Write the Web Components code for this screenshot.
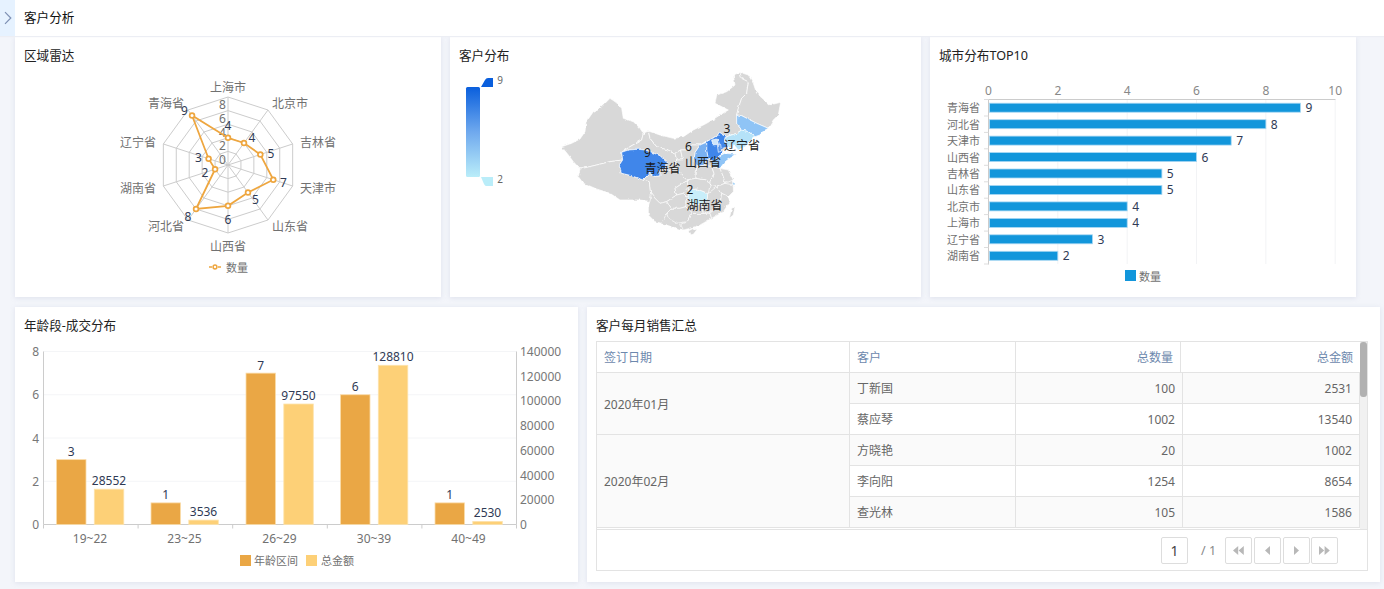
<!DOCTYPE html>
<html lang="zh">
<head>
<meta charset="utf-8">
<title>客户分析</title>
<style>
html,body{margin:0;padding:0;background:#f3f5fa;height:589px;overflow:hidden;font-family:"Noto Sans","Noto Sans CJK SC",sans-serif;}
</style>
</head>
<body>
<app-shell>
  <top-bar slot="top" label="客户分析"></top-bar>
  <card-row cols="426px 471px 426px" h="260">
    <chart-card title-text="区域雷达"><radar-chart></radar-chart></chart-card>
    <chart-card title-text="客户分布"><map-chart></map-chart></chart-card>
    <chart-card title-text="城市分布TOP10"><rank-chart></rank-chart></chart-card>
  </card-row>
  <card-row cols="563px 793px" h="275">
    <chart-card title-text="年龄段-成交分布"><age-chart></age-chart></chart-card>
    <chart-card title-text="客户每月销售汇总"><sales-table></sales-table></chart-card>
  </card-row>
</app-shell>
<script>
const FONT='"Noto Sans","Noto Sans CJK SC",sans-serif';
const T=(x,y,s,o={})=>`<text x="${x}" y="${y}" dominant-baseline="central" text-anchor="${o.a||'middle'}" font-size="${o.s||12}" fill="${o.c||'#717171'}">${s}</text>`;
class Base extends HTMLElement{
  connectedCallback(){ if(!this.shadowRoot){this.attachShadow({mode:'open'});this.shadowRoot.innerHTML=this.html();} }
}
customElements.define('app-shell',class extends Base{html(){return `<style>
:host{display:flex;flex-direction:column;width:1384px;height:589px;}
.rows{display:flex;flex-direction:column;gap:10px;padding:1px 0 0 15px;}
</style><slot name="top"></slot><div class="rows"><slot></slot></div>`}});
customElements.define('top-bar',class extends Base{html(){return `<style>
:host{display:flex;height:36px;background:#fff;box-shadow:0 1px 1px #eceef4;position:relative;z-index:2;}
.tg{width:15px;background:#e6f2ff;display:flex;align-items:center;justify-content:center;}
.t{margin-left:9px;line-height:35px;font-size:12.6px;color:#111;}
</style><div class="tg"><svg width="8" height="14" viewBox="0 0 8 14"><path d="M1 1.2 6.8 7 1 12.8" fill="none" stroke="#7d8fb3" stroke-width="1.2"/></svg></div><div class="t">${this.getAttribute('label')}</div>`}});
customElements.define('card-row',class extends Base{html(){return `<style>
:host{display:grid;grid-template-columns:${this.getAttribute('cols')};column-gap:9px;height:${this.getAttribute('h')}px;}
</style><slot></slot>`}});
customElements.define('chart-card',class extends Base{html(){return `<style>
:host{display:flex;flex-direction:column;background:#fff;box-shadow:0 1px 5px rgba(150,160,190,.22);min-width:0;}
.h{height:34px;padding:5px 0 0 9px;box-sizing:border-box;line-height:28px;font-size:12.6px;color:#222;flex:none;}
</style><div class="h">${this.getAttribute('title-text')}</div><slot></slot>`}});

customElements.define('radar-chart',class extends Base{html(){
  const cx=228,cy=165,R=68,pt=(i,v)=>{const a=i*Math.PI/5;return [(cx+R*v/10*Math.sin(a)).toFixed(2),(cy-R*v/10*Math.cos(a)).toFixed(2)]};
  let rings='',axes='';
  for(let r=2;r<=10;r+=2){rings+=`<polygon points="${[...Array(10).keys()].map(i=>pt(i,r).join(',')).join(' ')}" fill="none" stroke="#ccc" stroke-width="1"/>`}
  for(let i=0;i<10;i++){axes+=`<line x1="${cx}" y1="${cy}" x2="${pt(i,10)[0]}" y2="${pt(i,10)[1]}" stroke="#ccc"/>`}
  const v=[4,4,5,7,5,6,8,2,3,9];
  const names=[['上海市',228,87.5],['北京市',290,103.5],['吉林省',318,142],['天津市',318,188.5],['山东省',290,226],['山西省',228,246.5],['河北省',166,226],['湖南省',138,188.5],['辽宁省',138,142],['青海省',166,103.5]];
  const dl=[[228,125.5],[252,137],[271,153],[283.5,182],[255.5,199],[228,219],[188,216],[205,172],[198.5,157],[184.5,110]];
  const pts=v.map((x,i)=>pt(i,x));
  return `<style>:host{display:block;height:226px}svg{display:block;font-family:${FONT}}</style>
  <svg width="426" height="226" viewBox="15 71 426 226">${rings}${axes}
  ${[[8,104.5],[6,118.5],[4,132],[2,145.5],[0,159.5]].map(a=>T(222.5,a[1],a[0])).join('')}
  <polygon points="${pts.map(p=>p.join(',')).join(' ')}" fill="none" stroke="#eea63f" stroke-width="1.8"/>
  ${pts.map(p=>`<circle cx="${p[0]}" cy="${p[1]}" r="2.4" fill="#fff" stroke="#eea63f" stroke-width="1.7"/>`).join('')}
  ${names.map(n=>T(n[1],n[2],n[0])).join('')}
  ${dl.map((d,i)=>T(d[0],d[1],v[i],{c:'#2f3a55'})).join('')}
  <line x1="209" x2="221" y1="267" y2="267" stroke="#eea63f" stroke-width="1.4" stroke-dasharray="3 6 3"/>
  <circle cx="215" cy="267" r="1.9" fill="#fff" stroke="#eea63f" stroke-width="1.5"/>
  ${T(226,267,'数量',{a:'start',s:11})}</svg>`}});

customElements.define('map-chart',class extends Base{html(){
  const G='#d8d8d8';
  const P=[
  [G,'5,245 35,235 60,222 75,200 78,172 100,140 125,125 150,100 168,112 185,130 190,160 220,170 240,190 250,205 245,225 210,245 185,262 188,285 150,290 110,300 60,312 40,290 25,270'],
  [G,'60,312 110,300 150,290 188,285 178,300 185,325 215,332 235,340 250,345 268,350 272,385 285,400 275,410 240,405 210,405 180,405 150,385 110,372 70,355 55,335'],
  [G,'245,225 250,205 265,198 270,220 290,245 325,255 345,265 350,285 345,305 335,320 316,312 318,290 300,272 275,262 255,255 235,253 205,255 185,262 210,245'],
  [G,'265,198 300,210 340,220 370,215 400,195 440,175 480,150 505,135 465,115 470,90 500,80 525,60 520,30 540,22 545,40 565,50 560,85 545,100 535,130 530,150 530,175 545,195 530,205 500,215 478,202 470,215 445,225 420,240 395,240 380,255 362,255 345,265 325,255 290,245 270,220'],
  [G,'540,22 565,30 580,55 590,85 630,120 662,112 655,150 640,165 625,190 590,175 570,165 545,152 530,150 535,130 545,100 560,85 565,50 545,40'],
  ['#8fc4f6','530,150 545,152 570,165 590,175 625,190 610,198 600,210 585,215 565,200 545,195 530,175'],
  ['#b5e2f8','545,195 565,200 585,215 570,228 555,245 535,255 522,240 508,245 495,232 500,215 530,205'],
  ['#3f86ea','445,225 470,215 478,202 500,215 495,232 505,245 480,252 490,262 472,275 462,290 445,280 440,258 440,232'],
  ['#cfe6fb','455,225 472,222 475,238 458,240'],
  ['#5a97ec','472,240 482,238 485,258 475,262'],
  ['#79b0f1','405,262 420,240 440,232 440,258 445,280 435,300 410,305 402,285'],
  ['#8fc4f6','462,290 472,275 495,265 530,268 510,280 495,290 480,310 455,305'],
  [G,'345,265 362,255 368,285 350,285'],
  [G,'362,255 380,255 395,240 420,240 405,262 402,285 410,305 408,340 380,345 365,330 345,305 350,285 368,285'],
  ['#3f86ea','185,262 205,255 235,253 255,255 275,262 300,272 318,290 316,312 300,315 300,333 285,335 268,325 250,345 235,340 215,332 185,325 178,300 188,285'],
  [G,'268,350 250,345 268,325 285,335 300,333 300,315 316,312 335,320 345,305 365,330 380,345 360,360 345,370 350,390 335,400 320,410 300,415 285,400 272,385'],
  [G,'345,370 360,360 380,345 385,365 370,385 350,390'],
  [G,'275,385 285,400 300,415 320,410 335,430 320,445 305,475 285,470 265,450 265,425'],
  [G,'320,410 335,400 350,390 370,385 385,400 378,410 378,425 360,430 335,430'],
  [G,'335,430 360,430 378,425 395,445 380,470 350,475 325,460 320,445'],
  [G,'395,445 430,445 450,445 455,460 420,480 390,490 370,495 362,478 380,470'],
  [G,'385,498 400,490 410,495 400,508 390,510'],
  [G,'378,410 385,400 395,418 425,418 430,445 395,445 378,425'],
  ['#c8eefa','385,375 412,372 443,385 442,405 425,418 395,418 385,400'],
  [G,'380,345 408,340 440,345 450,360 445,385 443,385 412,372 385,375 385,365'],
  [G,'410,305 435,300 455,305 462,325 450,350 450,360 440,345 408,340'],
  [G,'455,305 480,310 490,335 495,355 470,365 450,360 450,350 462,325'],
  [G,'480,310 505,315 520,345 495,355 490,335'],
  ['#9ecff7','518,352 525,352 525,360 518,360'],
  [G,'495,355 520,360 520,380 505,395 485,385 470,365'],
  [G,'445,385 470,365 485,385 480,420 455,440 430,445 425,418 442,405 443,385'],
  [G,'480,420 485,385 505,395 510,410 490,440 455,460 450,445 455,440'],
  [G,'515,430 525,425 520,450 508,460']
  ];
  const black={c:'#1c1c1c',a:'start'};
  return `<style>:host{display:block;height:226px}svg{display:block;font-family:${FONT}}</style>
  <svg width="471" height="226" viewBox="450 71 471 226">
  <defs><linearGradient id="g" x1="0" y1="0" x2="0" y2="1"><stop offset="0" stop-color="#0a5fdd"/><stop offset=".5" stop-color="#6fa9ee"/><stop offset="1" stop-color="#baedf9"/></linearGradient>
  <filter id="rough" x="-5%" y="-5%" width="110%" height="110%"><feTurbulence type="fractalNoise" baseFrequency=".07" numOctaves="2" seed="3"/><feDisplacementMap in="SourceGraphic" scale="9" xChannelSelector="R" yChannelSelector="G"/></filter></defs>
  <rect x="466" y="87" width="14" height="90" rx="1.5" fill="url(#g)"/>
  <path d="M481 87 485 80Q486 78 488 78H493V87Z" fill="#0a5fdd"/>
  <path d="M481 177H493V186H486Q485 186 484 184Z" fill="#baedf9"/>
  ${T(500,79.5,'9',{s:10,c:'#666'})}${T(500,178.5,'2',{s:10,c:'#666'})}
  <g transform="translate(560 65) scale(.33333)" stroke="#fff" stroke-width="2" stroke-linejoin="round" filter="url(#rough)">
  <polygon stroke="none" fill="${G}" points="185,262 345,265 530,205 505,245 470,275 455,305 505,315 520,360 505,395 490,440 420,480 370,495 305,475 268,350"/>
  ${P.map(p=>`<polygon fill="${p[0]}" points="${p[1]}"/>`).join('')}
  </g>
  ${T(644,152,'9',black)}${T(644.5,168,'青海省',black)}
  ${T(685,146.5,'6',black)}${T(685,162.5,'山西省',black)}
  ${T(723.5,128.5,'3',black)}${T(724,145,'辽宁省',black)}
  ${T(686.5,189,'2',black)}${T(686.5,205,'湖南省',black)}
  </svg>`}});

customElements.define('rank-chart',class extends Base{html(){
  const d=[['青海省',9],['河北省',8],['天津市',7],['山西省',6],['吉林省',5],['山东省',5],['北京市',4],['上海市',4],['辽宁省',3],['湖南省',2]];
  const x0=988.5,u=34.67,y0=99.5,h=16.45;let s='';
  for(let i=0;i<=10;i+=2){const x=x0+i*u;if(i)s+=`<line x1="${x}" x2="${x}" y1="${y0}" y2="264" stroke="#f2f3f5"/>`;s+=T(x,90,i,{c:'#888'})}
  s+=`<line x1="${x0}" x2="1335.5" y1="${y0}" y2="${y0}" stroke="#ccc"/><line x1="${x0}" x2="${x0}" y1="${y0}" y2="264.5" stroke="#ccc"/>`;
  for(let i=0;i<=10;i++){const y=(y0+i*h).toFixed(1);s+=`<line x1="984" x2="${x0}" y1="${y}" y2="${y}" stroke="#ddd"/>`}
  d.forEach((r,i)=>{const yc=y0+(i+.5)*h,w=r[1]*u;
    s+=`<rect x="989.5" y="${(yc-4.5).toFixed(1)}" width="${(w-1).toFixed(1)}" height="9" fill="#1296db" stroke="#a9d8f3" stroke-width=".8"/>`;
    s+=T(980,yc,r[0],{a:'end',s:11});
    s+=T(x0+w+5,yc,r[1],{a:'start',c:'#2f3a55'});
  });
  return `<style>:host{display:block;height:226px}svg{display:block;font-family:${FONT}}</style>
  <svg width="426" height="226" viewBox="930 71 426 226">${s}
  <rect x="1125" y="270" width="11" height="11" fill="#1296db"/>${T(1139,276,'数量',{a:'start',s:11})}</svg>`}});

customElements.define('age-chart',class extends Base{html(){
  const x0=43.5,x1=516.5,yb=524.5,yt=351.5,H=173;let s='';
  for(let i=1;i<=4;i++){const y=yb-i*H/4;s+=`<line x1="${x0}" x2="${x1}" y1="${y}" y2="${y}" stroke="#f4f5f7"/>`}
  s+=`<line x1="${x0}" x2="${x0}" y1="${yt}" y2="${yb}" stroke="#ccc"/><line x1="${x1}" x2="${x1}" y1="${yt}" y2="${yb}" stroke="#ccc"/><line x1="${x0}" x2="${x1}" y1="${yb}" y2="${yb}" stroke="#ccc"/>`;
  for(let i=0;i<=5;i++){const x=x0+i*94.6;s+=`<line x1="${x.toFixed(1)}" x2="${x.toFixed(1)}" y1="${yb}" y2="${yb+4}" stroke="#ccc"/>`}
  [0,2,4,6,8].forEach(v=>{s+=T(39,yb-v/8*H,v,{a:'end',c:'#777'})});
  for(let i=0;i<=7;i++){s+=T(520,yb-i/7*H,i*20000,{a:'start',c:'#777'})}
  const D=[['19~22',3,28552,56.5],['23~25',1,3536,151],['26~29',7,97550,246],['30~39',6,128810,340.5],['40~49',1,2530,435]];
  D.forEach(d=>{const x=d[3],h1=d[1]/8*H,h2=d[2]/140000*H;
    s+=`<rect x="${x}" y="${yb-h1}" width="29.5" height="${h1}" fill="#eaa745" stroke="#fbdcaa" stroke-width=".8"/>`;
    s+=`<rect x="${x+37.8}" y="${(yb-h2).toFixed(1)}" width="29.5" height="${h2.toFixed(1)}" fill="#fdd077" stroke="#fde3ad" stroke-width=".8"/>`;
    s+=T(x+14.7,yb-h1-8,d[1],{c:'#2f3a55'});
    s+=T(x+52.5,yb-h2-8.5,d[2],{c:'#2f3a55'});
    s+=T(x+33.5,538,d[0],{c:'#717171'});
  });
  return `<style>:host{display:block;height:241px}svg{display:block;font-family:${FONT}}</style>
  <svg width="563" height="241" viewBox="15 341 563 241">${s}
  <rect x="240" y="555" width="11" height="11" fill="#eaa745"/>${T(254,560.5,'年龄区间',{a:'start',s:11})}
  <rect x="306" y="555" width="11" height="11" fill="#fdd077"/>${T(321,560.5,'总金额',{a:'start',s:11})}</svg>`}});

customElements.define('pager-bar',class extends Base{html(){
  const c='#b8b8b8';
  const ic=[
   '<path d="M5.2 0v9L0 4.5ZM10.8 0v9L5.6 4.5Z"/>',
   '<path d="M8 0v9L3 4.5Z"/>',
   '<path d="M3 0v9l5-4.5Z"/>',
   '<path d="M0 0v9l5.2-4.5ZM5.6 0v9l5.2-4.5Z"/>'];
  return `<style>
:host{display:flex;align-items:center;justify-content:flex-end;height:40px;padding-right:29px;box-sizing:border-box;font-size:13px;}
.box{width:27px;height:27px;box-sizing:border-box;border:1px solid #ddd;border-radius:2px;display:flex;align-items:center;justify-content:center;background:#fff;}
.cur{color:#444;font-size:14px;}
.tot{width:24px;margin-left:13px;color:#888;font-size:12.5px;white-space:pre;}
.bs{display:flex;gap:2px;}
.bs .box:last-child{margin-left:-1px;}
svg{display:block;fill:${c};}
</style><div class="box cur">1</div><div class="tot">/ 1</div><div class="bs">${ic.map(p=>`<div class="box"><svg width="11" height="9" viewBox="0 0 11 9">${p}</svg></div>`).join('')}</div>`}});

customElements.define('sales-table',class extends Base{html(){
  const R=[['丁新国',100,2531],['蔡应琴',1002,13540],['方晓艳',20,1002],['李向阳',1254,8654],['查光林',105,1586]];
  const alt=i=>i%2==0?' alt':'';
  let b=`<div class="c alt" style="grid-row:1/span 2;grid-column:1">2020年01月</div><div class="c alt" style="grid-row:3/span 3;grid-column:1">2020年02月</div>`;
  R.forEach((r,i)=>{b+=`<div class="c${alt(i)}" style="grid-row:${i+1};grid-column:2">${r[0]}</div><div class="c r${alt(i)}" style="grid-row:${i+1};grid-column:3">${r[1]}</div><div class="c r${alt(i)} e" style="grid-row:${i+1};grid-column:4">${r[2]}</div>`});
  return `<style>
:host{display:flex;flex-direction:column;height:230px;width:772px;box-sizing:border-box;margin-left:9px;border:1px solid #e3e3e3;font-size:12px;color:#666;}
.sc{display:flex;height:187px;overflow:hidden;flex:none;}
.main{width:763px;flex:none;}
.hd,.bd{display:grid;grid-auto-rows:31px;}
.hd{grid-template-columns:253px 166px 165px 179px;color:#6d88ad;}
.bd{grid-template-columns:253px 166px 167px 177px;}
.c{box-sizing:border-box;border-right:1px solid #e3e3e3;border-bottom:1px solid #e3e3e3;padding:0 7px;display:flex;align-items:center;}
.bd .r{justify-content:flex-end;padding-right:7px;}
.hd .r{justify-content:flex-end;padding-right:7px;}
.hd .c:last-child{border-right:0;padding-right:7px}
.bd .e{padding-right:7px;}
.alt{background:#fafafa;}
.bar{flex:1;background:#f1f1f1;position:relative;}
.th{width:7px;height:55px;background:#b1b1b1;border-radius:3px;margin-left:0;}
.ft{border-top:1px solid #e3e3e3;flex:1;}
</style><div class="sc"><div class="main">
<div class="hd"><div class="c">签订日期</div><div class="c">客户</div><div class="c r">总数量</div><div class="c r">总金额</div></div>
<div class="bd">${b}</div></div><div class="bar"><div class="th"></div></div></div>
<pager-bar class="ft"></pager-bar>`}});
</script>
</body>
</html>
